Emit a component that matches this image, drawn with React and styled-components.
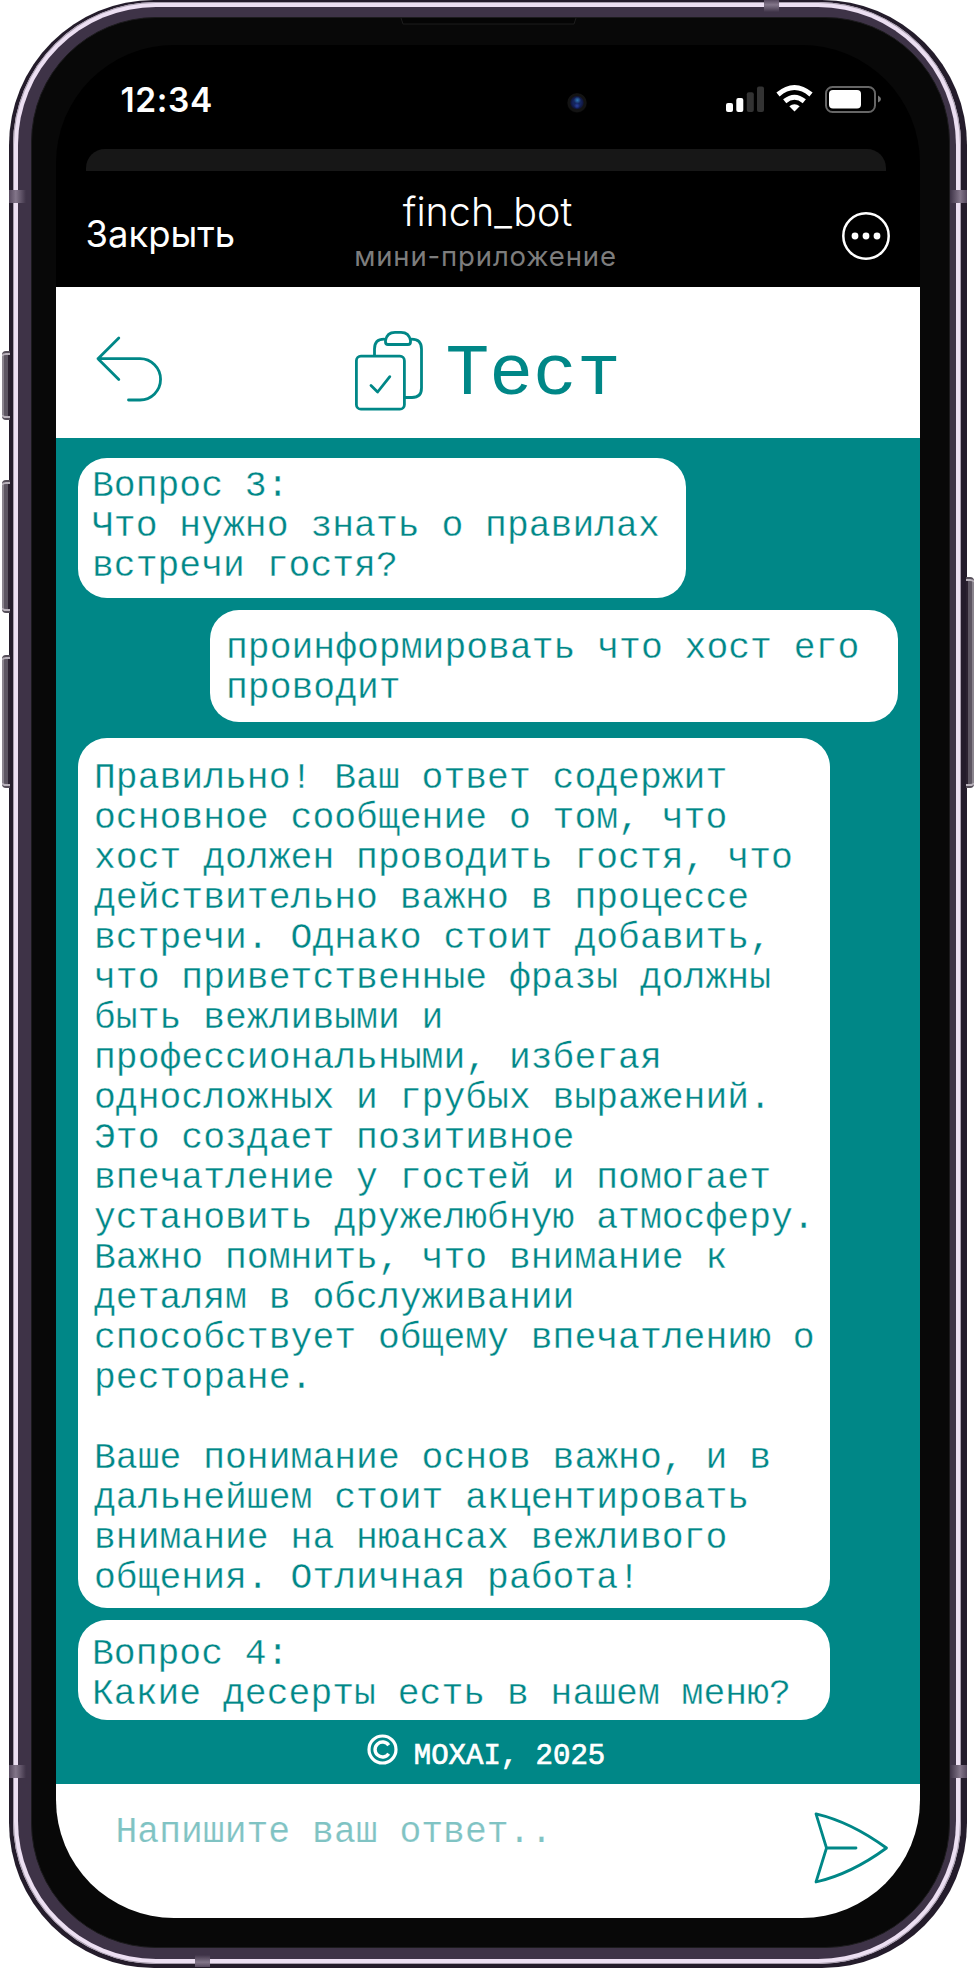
import React from "react";
import styled, { createGlobalStyle } from "styled-components";

const TEAL = "#008787";

const Global = createGlobalStyle`
  * { box-sizing: border-box; }
  body { margin: 0; background: #fff; }
`;

const Stage = styled.main`
  position: relative;
  width: 974px;
  height: 1968px;
  padding: 0 7px 0 9px;
  overflow: hidden;
  background: #fff;
`;

/* Phone body: nested metal rims around the glass */
const Edge = styled.div`
  height: 1968px;
  padding: 1.5px 6px 4px 4px;
  border-radius: 145px;
  background: #241c2b;
`;
const Shine = styled.div`
  height: 100%;
  padding: 5px;
  border-radius: 143px;
  background: #ecdff2;
  box-shadow: inset 0 0 0 1px #a79dad;
`;
const Band = styled.div`
  height: 100%;
  padding: 10.5px 6.5px 11px 12.5px;
  border-radius: 138px;
  background: #3e3347;
`;
const Bezel = styled.div`
  height: 100%;
  padding: 27px 27px 29px 24px;
  border: 1px solid #1b1a1c;
  border-radius: 125px;
  background: #080808;
`;
const Screen = styled.div`
  display: flex;
  flex-direction: column;
  width: 864px;
  height: 1873px;
  overflow: hidden;
  border-radius: 118px;
  background: #000;
`;

const SideButton = styled.span`
  position: absolute;
  ${(p) => (p.$right ? "right: 0;" : "left: 2px;")}
  top: ${(p) => p.$top}px;
  width: 8px;
  height: ${(p) => p.$height}px;
  border-radius: ${(p) => (p.$right ? "0 4px 4px 0" : "4px 0 0 4px")};
  border-top: 2px solid #554e59;
  border-bottom: 2px solid #554e59;
  background: linear-gradient(${(p) => (p.$right ? "270deg" : "90deg")}, #8b858e 0 2px, #5d5662 2px 6px, #2b2230 6px);
  box-shadow: inset 0 3px 0 -1px #b9b2bb, inset 0 -3px 0 -1px #b9b2bb;
`;
const Antenna = styled.span`
  position: absolute;
  left: ${(p) => p.$x}px;
  top: ${(p) => p.$y}px;
  width: ${(p) => (p.$flat ? 15 : 17)}px;
  height: ${(p) => (p.$flat ? 12 : 13)}px;
  background: linear-gradient(${(p) => p.$dir}, #56495e, #83768a 40%, #3e3347);
`;
const Speaker = styled.svg`
  position: absolute;
  left: 400px;
  top: 17px;
`;
const Camera = styled.span`
  position: absolute;
  left: 567px;
  top: 93px;
  width: 20px;
  height: 20px;
  border-radius: 50%;
  background:
    radial-gradient(circle at 52% 36%, #2f78b4 0, transparent 3.5px),
    radial-gradient(circle at 50% 64%, #2a3fa0 0, transparent 3px),
    radial-gradient(circle at 50% 48%, #14245c 0 4px, #10163f 6px, #131313 7px 9px, #070707 10px);
`;

const StatusBar = styled.div`
  display: flex;
  flex: none;
  justify-content: space-between;
  height: 104px;
  padding: 35px 39px 0 65px;
`;
const Clock = styled.time`
  font: 600 33.5px/40px Inter, sans-serif;
  letter-spacing: 0.6px;
  color: #fff;
`;
const StatusIcons = styled.svg`
  display: block;
  margin-top: 4px;
`;
const SheetEdge = styled.div`
  flex: none;
  height: 22px;
  margin: 0 34px 0 30px;
  border-radius: 19px 19px 0 0;
  background: #171717;
`;
const AppBar = styled.header`
  display: grid;
  flex: none;
  grid-template-columns: 200px 1fr 200px;
  height: 116px;
  padding: 0 30px;
  font-family: Inter, sans-serif;
  color: #fff;
`;
const Close = styled.span`
  padding-top: 41px;
  font-size: 36.4px;
  line-height: 44px;
  white-space: nowrap;
`;
const BotInfo = styled.div`
  display: flex;
  flex-direction: column;
  align-items: center;
  padding: 17px 0 0;
`;
const BotName = styled.span`
  font-size: 39.5px;
  font-weight: 300;
  line-height: 48px;
`;
const BotKind = styled.span`
  margin: 3px 4px 0 0;
  font-size: 27.5px;
  letter-spacing: 0.85px;
  line-height: 34px;
  color: #7d7d7d;
`;
const Menu = styled.svg`
  justify-self: end;
  margin-top: 40px;
`;

const Toolbar = styled.div`
  display: flex;
  flex: none;
  height: 151px;
  padding: 43px 0 0 40px;
  background: #fff;
`;
const BackIcon = styled.svg`
  margin-right: 190px;
`;
const Title = styled.h1`
  margin: 5px 0 0 22px;
  font: 400 73px/80px "Liberation Mono", monospace;
  color: ${TEAL};
`;
const Stroked = styled.g`
  fill: none;
  stroke: ${TEAL};
  stroke-width: 2.8;
  stroke-linecap: round;
  stroke-linejoin: round;
`;

const Chat = styled.section`
  display: flex;
  flex: none;
  flex-direction: column;
  align-items: flex-start;
  height: 1346px;
  padding: 20px 22px 0;
  background: ${TEAL};
`;
const Bubble = styled.p`
  flex: none;
  align-self: ${(p) => (p.$own ? "flex-end" : "flex-start")};
  width: ${(p) => p.$width}px;
  height: ${(p) => p.$height}px;
  margin: 0 0 ${(p) => p.$gap ?? 12}px;
  padding: ${(p) => p.$padTop}px 0 0 ${(p) => p.$padLeft ?? 14.5}px;
  border-radius: 29px;
  background: #fff;
  color: ${TEAL};
  font: 36.4px/40px "Liberation Mono", monospace;
  -webkit-text-stroke: 0.35px #fff;
  white-space: pre;
`;
const Footer = styled.footer`
  display: flex;
  align-self: center;
  gap: 16px;
  margin: 0 0 0 -3px;
  font: 29px/36px "Liberation Mono", monospace;
  color: #fff;
  -webkit-text-stroke: 0.7px #fff;
`;
const FooterText = styled.span`
  padding-top: 7px;
`;

const Composer = styled.div`
  display: flex;
  flex: none;
  justify-content: space-between;
  height: 134px;
  padding: 27px 31px 0 60px;
  background: #fff;
`;
const Placeholder = styled.span`
  padding-top: 2px;
  font: 36.4px/40px "Liberation Mono", monospace;
  color: #80c3c3;
  -webkit-text-stroke: 0.2px #fff;
`;

const QUESTION_3 = `Вопрос 3:
Что нужно знать о правилах
встречи гостя?`;
const ANSWER = `проинформировать что хост его
проводит`;
const REVIEW = `Правильно! Ваш ответ содержит
основное сообщение о том, что
хост должен проводить гостя, что
действительно важно в процессе
встречи. Однако стоит добавить,
что приветственные фразы должны
быть вежливыми и
профессиональными, избегая
односложных и грубых выражений.
Это создает позитивное
впечатление у гостей и помогает
установить дружелюбную атмосферу.
Важно помнить, что внимание к
деталям в обслуживании
способствует общему впечатлению о
ресторане.

Ваше понимание основ важно, и в
дальнейшем стоит акцентировать
внимание на нюансах вежливого
общения. Отличная работа!`;
const QUESTION_4 = `Вопрос 4:
Какие десерты есть в нашем меню?`;

export default function App() {
  return (
    <Stage>
      <Global />
      <SideButton $top={351} $height={69} />
      <SideButton $top={480} $height={133} />
      <SideButton $top={655} $height={133} />
      <SideButton $right $top={577} $height={211} />
      <Edge>
        <Shine>
          <Band>
            <Bezel>
              <Screen>
                <StatusBar>
                  <Clock>12:34</Clock>
                  <StatusIcons width="156" height="30" viewBox="725 84 156 30">
                    <g fill="#fff">
                      <rect x="726" y="103" width="7" height="9" rx="2" />
                      <rect x="736.3" y="98" width="7" height="14" rx="2" />
                    </g>
                    <g fill="#333">
                      <rect x="746.8" y="92.3" width="7" height="19.7" rx="2" />
                      <rect x="757" y="86.5" width="7" height="25.5" rx="2" />
                    </g>
                    <g fill="none" stroke="#fff" strokeWidth="5">
                      <path d="M778 94.5Q794.5 80.5 811 94.5" />
                      <path d="M784.7 101.3Q794.5 93.2 804.3 101.3" />
                    </g>
                    <path d="M789.3 106.3Q794.5 102 799.7 106.3L794.5 111.5Z" fill="#fff" />
                    <rect x="826" y="87" width="49" height="25" rx="6.5" fill="none" stroke="#666" strokeWidth="2" />
                    <rect x="829" y="90" width="32" height="18.5" rx="4" fill="#fff" />
                    <path d="M878 95.5Q881 97 881 99T878 102.5Z" fill="#777" />
                  </StatusIcons>
                </StatusBar>
                <SheetEdge />
                <AppBar>
                  <Close>Закрыть</Close>
                  <BotInfo>
                    <BotName>finch_bot</BotName>
                    <BotKind>мини-приложение</BotKind>
                  </BotInfo>
                  <Menu width="50" height="50" viewBox="0 0 50 50">
                    <circle cx="26" cy="25" r="22.7" fill="none" stroke="#fff" strokeWidth="2.5" />
                    <g fill="#fff">
                      <circle cx="15" cy="25" r="3.4" />
                      <circle cx="26" cy="25" r="3.4" />
                      <circle cx="37" cy="25" r="3.4" />
                    </g>
                  </Menu>
                </AppBar>
                <Toolbar>
                  <BackIcon width="68" height="80" viewBox="96 330 68 80">
                    <Stroked>
                      <path d="M118.8 338L98 358.7L118.8 379.5M98 358.7H140A20.5 20.6 0 0 1 140 400H128.5" />
                    </Stroked>
                  </BackIcon>
                  <svg width="70" height="82" viewBox="354 330 70 82">
                    <Stroked>
                      <rect x="356.4" y="356.2" width="48" height="53" rx="4.5" />
                      <path d="M371 385.5L377.6 392L389.8 376.7" />
                      <path d="M374.5 355V349Q374.5 339.2 384 339.2M411.5 339.2Q421.5 339.2 421.5 349V388Q421.5 397.5 412 397.5H405" />
                      <path d="M388 344.5H408Q410.5 344.5 410.5 342V340.5Q409 332.3 401 332.3H395Q387 332.3 385.5 340.5V342Q385.5 344.5 388 344.5Z" />
                    </Stroked>
                  </svg>
                  <Title>Тест</Title>
                </Toolbar>
                <Chat>
                  <Bubble $width={608} $height={140} $padTop={9}>{QUESTION_3}</Bubble>
                  <Bubble $own $width={688} $height={112} $padTop={19} $padLeft={16.5} $gap={16}>{ANSWER}</Bubble>
                  <Bubble $width={752} $height={870} $padTop={21} $padLeft={16.5}>{REVIEW}</Bubble>
                  <Bubble $width={752} $height={100} $padTop={15}>{QUESTION_4}</Bubble>
                  <Footer>
                    <svg width="31" height="36" viewBox="0 0 31 36">
                      <circle cx="15.5" cy="17.5" r="13.5" fill="none" stroke="#fff" strokeWidth="3.2" />
                      <path d="M21.7 13.2A7.5 7.5 0 1 0 21.7 21.8" fill="none" stroke="#fff" strokeWidth="3.4" />
                    </svg>
                    <FooterText>MOXAI, 2025</FooterText>
                  </Footer>
                </Chat>
                <Composer>
                  <Placeholder>Напишите ваш ответ..</Placeholder>
                  <svg width="76" height="74" viewBox="813 1811 76 74">
                    <Stroked>
                      <path d="M816 1813.8Q851 1822 886.5 1848Q851 1874 816 1882L826.5 1848ZM826.5 1848H856" />
                    </Stroked>
                  </svg>
                </Composer>
              </Screen>
            </Bezel>
          </Band>
        </Shine>
      </Edge>
      <Speaker width="177" height="8" viewBox="0 0 177 8">
        <path d="M1 1L3 7H174L176 1" fill="#050505" stroke="#1d1d1d" />
      </Speaker>
      <Camera />
      <Antenna $x={9} $y={190} $dir="90deg" />
      <Antenna $x={950} $y={190} $dir="270deg" />
      <Antenna $x={9} $y={1765} $dir="90deg" />
      <Antenna $x={950} $y={1765} $dir="270deg" />
      <Antenna $flat $x={764} $y={0} $dir="180deg" />
      <Antenna $flat $x={195} $y={1955} $dir="0deg" />
    </Stage>
  );
}
